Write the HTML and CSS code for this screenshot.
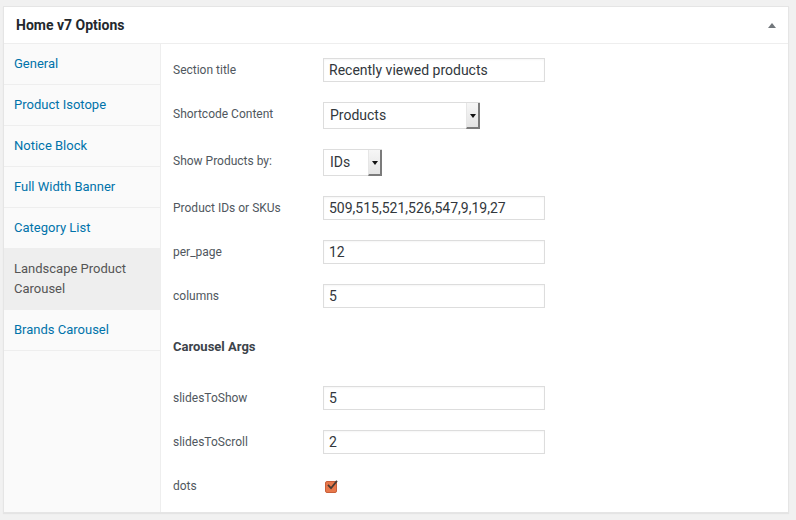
FILE: index.html
```html
<!DOCTYPE html>
<html>
<head>
<meta charset="utf-8">
<link rel="stylesheet" href="styles.css">
</head>
<body>
<div class="panel">
  <div class="panel-head">
    <h2 class="panel-title">Home v7 Options</h2>
    <span class="toggle"></span>
  </div>
  <div class="panel-body">
    <ul class="tabs">
      <li class="tab"><a>General</a></li>
      <li class="tab"><a>Product Isotope</a></li>
      <li class="tab"><a>Notice Block</a></li>
      <li class="tab"><a>Full Width Banner</a></li>
      <li class="tab"><a>Category List</a></li>
      <li class="tab active"><a>Landscape Product Carousel</a></li>
      <li class="tab"><a>Brands Carousel</a></li>
    </ul>
    <div class="content">
      <div class="row">
        <label class="label">Section title</label>
        <div class="input wide">Recently viewed products</div>
      </div>
      <div class="row sel-row">
        <label class="label">Shortcode Content</label>
        <div class="select sel-products"><span class="sel-text">Products</span><span class="sel-btn"><span class="arrow"></span></span></div>
      </div>
      <div class="row sel-row">
        <label class="label">Show Products by:</label>
        <div class="select sel-ids"><span class="sel-text">IDs</span><span class="sel-btn"><span class="arrow"></span></span></div>
      </div>
      <div class="row">
        <label class="label">Product IDs or SKUs</label>
        <div class="input wide">509,515,521,526,547,9,19,27</div>
      </div>
      <div class="row">
        <label class="label">per_page</label>
        <div class="input wide">12</div>
      </div>
      <div class="row">
        <label class="label">columns</label>
        <div class="input wide">5</div>
      </div>
      <h3 class="group-title">Carousel Args</h3>
      <div class="row">
        <label class="label">slidesToShow</label>
        <div class="input wide">5</div>
      </div>
      <div class="row">
        <label class="label">slidesToScroll</label>
        <div class="input wide">2</div>
      </div>
      <div class="row">
        <label class="label">dots</label>
        <div class="check-wrap">
          <span class="checkbox"><svg width="12" height="12" viewBox="0 0 12 12"><path d="M2.6 5.6 L5 8.2 L10.4 1.6" fill="none" stroke="#4a3a33" stroke-width="1.8" stroke-linecap="square"/></svg></span>
        </div>
      </div>
    </div>
  </div>
</div>
</body>
</html>
```
FILE: styles.css
```css
* { box-sizing: border-box; }
html, body { margin: 0; padding: 0; }
body {
  background: #f1f1f1;
  font-family: Roboto, "Noto Sans", Arial, sans-serif;
  color: #444;
  width: 796px;
  height: 520px;
  overflow: hidden;
}
.panel {
  margin: 6px 0 0 3px;
  width: 786px;
  background: #fff;
  border: 1px solid #e5e5e5;
  box-shadow: 0 1px 1px rgba(0,0,0,0.05);
}
.panel-head {
  height: 37px;
  border-bottom: 1px solid #eee;
  display: flex;
  align-items: center;
  justify-content: space-between;
  padding: 0 12px 0 12px;
}
.panel-title {
  margin: 0;
  font-size: 14px;
  font-weight: 700;
  color: #23282d;
  line-height: 20px;
}
.toggle {
  width: 0;
  height: 0;
  border-left: 4px solid transparent;
  border-right: 4px solid transparent;
  border-bottom: 5px solid #72777c;
  margin-right: 0;
}
.panel-body {
  display: flex;
  height: 468px;
}
.tabs {
  list-style: none;
  margin: 0;
  padding: 0;
  width: 157px;
  flex: none;
  background: #fafafa;
  border-right: 1px solid #eee;
}
.tab {
  border-bottom: 1px solid #eee;
  padding: 10px 10px 10px 10px;
  font-size: 13px;
  line-height: 20px;
}
.tab a {
  color: #0073aa;
  display: block;
}
.tab.active {
  background: #eee;
}
.tab.active a {
  color: #555;
}
.content {
  flex: 1;
  padding: 4px 12px 4px 12px;
}
.row {
  display: flex;
  align-items: center;
  padding: 10px 0;
}
.label {
  width: 150px;
  flex: none;
  font-size: 12px;
  color: #50575e;
  line-height: 16px;
}
.sel-row .label {
  margin-top: -4px;
}
.input {
  height: 24px;
  border: 1px solid #ddd;
  box-shadow: inset 0 1px 2px rgba(0,0,0,0.04);
  background: #fff;
  font-size: 14px;
  line-height: 22px;
  color: #32373c;
  padding: 0 5px;
}
.wide { width: 222px; }
.select {
  height: 27px;
  display: flex;
  align-items: stretch;
  border: 1px solid #ddd;
  border-right: none;
  border-bottom: none;
  background: #fff;
}
.sel-products { width: 157px; }
.sel-ids { width: 59px; }
.sel-text {
  flex: 1;
  font-size: 14px;
  line-height: 25px;
  color: #32373c;
  padding-left: 6px;
  border-bottom: 1px solid #ddd;
}
.sel-btn {
  width: 14px;
  flex: none;
  background: linear-gradient(#f6f6f6, #e4e4e4);
  border-left: 1px solid #e6e6e6;
  border-right: 2px solid #7b7b7b;
  border-bottom: 2px solid #7b7b7b;
  display: flex;
  align-items: center;
  justify-content: center;
}
.arrow {
  width: 0;
  height: 0;
  border-left: 3px solid transparent;
  border-right: 3px solid transparent;
  border-top: 4px solid #111;
  margin-top: 1px;
}
.group-title {
  margin: 0;
  padding: 20px 0;
  font-size: 13px;
  line-height: 18px;
  font-weight: 700;
  color: #3c434a;
}
.check-wrap {
  height: 24px;
  display: flex;
  align-items: center;
}
.checkbox {
  width: 12px;
  height: 12px;
  margin-left: 2px;
  margin-top: 1px;
  background: #e8784b;
  border: 1px solid #c9603a;
  border-radius: 2px;
  display: block;
  position: relative;
}
.checkbox svg {
  position: absolute;
  left: 0;
  top: -2px;
}
```
